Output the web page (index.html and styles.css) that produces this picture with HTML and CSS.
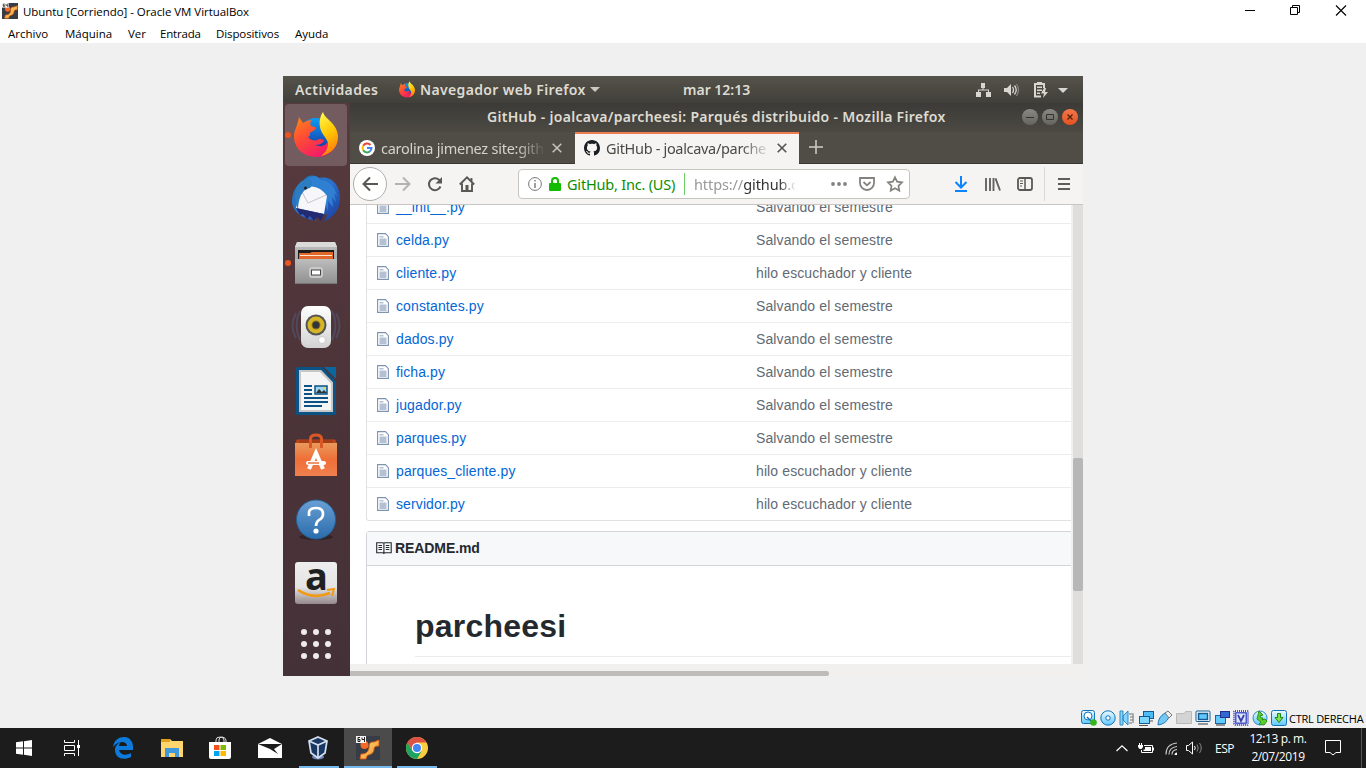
FILE: index.html
```
<!DOCTYPE html>
<html lang="es">
<head>
<meta charset="utf-8">
<title>Ubuntu [Corriendo] - Oracle VM VirtualBox</title>
<link rel="stylesheet" href="styles.css">
</head>
<body>
<svg class="defs" width="0" height="0" aria-hidden="true">
  <defs>
    <linearGradient id="ffRed" x1="0" y1="0" x2=".7" y2="1"><stop offset="0" stop-color="#ff8a16"/><stop offset=".45" stop-color="#ff4b35"/><stop offset="1" stop-color="#f0136f"/></linearGradient>
    <linearGradient id="ffYellow" x1=".3" y1="0" x2=".6" y2="1"><stop offset="0" stop-color="#fff44a"/><stop offset=".5" stop-color="#ffc400"/><stop offset="1" stop-color="#ff7a10"/></linearGradient>
    <linearGradient id="ffBlue" x1="0" y1="0" x2="0" y2="1"><stop offset="0" stop-color="#0a9cf5"/><stop offset="1" stop-color="#1a2f9c"/></linearGradient>
    <linearGradient id="metal" x1="0" y1="0" x2="0" y2="1"><stop offset="0" stop-color="#bdbdbd"/><stop offset="1" stop-color="#8f8f8f"/></linearGradient>
    <linearGradient id="white" x1="0" y1="0" x2="0" y2="1"><stop offset="0" stop-color="#ffffff"/><stop offset="1" stop-color="#d2d2d2"/></linearGradient>
    <linearGradient id="bag" x1="0" y1="0" x2="0" y2="1"><stop offset="0" stop-color="#e99a5c"/><stop offset=".5" stop-color="#ef6f38"/><stop offset="1" stop-color="#f0804e"/></linearGradient>
    <linearGradient id="help" x1="0" y1="0" x2="0" y2="1"><stop offset="0" stop-color="#6a9fd4"/><stop offset="1" stop-color="#2a6cab"/></linearGradient>
    <linearGradient id="bird" x1="0" y1="0" x2="1" y2="1"><stop offset="0" stop-color="#1d7bb8"/><stop offset=".5" stop-color="#2b6fcc"/><stop offset="1" stop-color="#1a3a9a"/></linearGradient>
    <linearGradient id="sky" x1="0" y1="0" x2="0" y2="1"><stop offset="0" stop-color="#eefaff"/><stop offset="1" stop-color="#5fc8ff"/></linearGradient>
    <linearGradient id="vmgold" x1="0" y1="0" x2="1" y2="1"><stop offset="0" stop-color="#ffe28a"/><stop offset="1" stop-color="#f08a1c"/></linearGradient>
    <symbol id="firefox" viewBox="0 0 44 46">
      <circle cx="22" cy="23" r="17" fill="url(#ffBlue)"/>
      <path d="M5 5c1 2 3 4 4 6 3-2 6-3 9-3-2 2-2 4-1 6 2 1 4 0 5 2-1 3-4 3-6 5 0 2 0 3-2 4 2 3 6 4 9 3 3-2 7-1 7 1-2 3-6 4-9 4 7 3 13 0 14-7 3-2 6-4 9-2 0 12-9 21-21 21C9 45 0 36 0 24 0 18 3 16 5 5z" fill="url(#ffRed)"/>
      <path d="M29 0c1 4 4 6 8 10 4 4 7 9 7 15 0 10-7 17-17 19 4-3 7-7 7-13-1-5-7-9-8-16-1-5 0-11 3-15z" fill="url(#ffYellow)"/>
    </symbol>
    <symbol id="vm64" viewBox="0 0 24 24">
      <rect width="24" height="24" fill="#373c46"/>
      <path d="M4 23l1-5c5 0 7-2 8-6 0-5 1-6 5-6l5-2v6c-4 0-5 1-5 4-1 5-5 4-7 6l-1 3z" fill="url(#vmgold)" stroke="#d45b12"/>
      <circle cx="8.500" cy="9" r="4" fill="#f26a24"/>
      <rect width="10" height="7" fill="#f4f4f4"/>
      <path d="M4 1.500H2v4h2v-2H2M6 1.500v2h2.500M8.500 1v5" fill="none" stroke="#222"/>
    </symbol>
    <symbol id="file" viewBox="0 0 12 16">
      <path d="M.6 1.600h7.900l2.900 3v9.800H.6z" fill="#fff" stroke="#7e93b0" stroke-width="1.100"/>
      <path d="M2.500 4h4v1.400h-4zM2.500 6.500h7V13h-7z" fill="#b4c1d3"/>
    </symbol>
  </defs>
</svg>

<div class="desktop">
  <header class="win-title">
    <svg class="win-icon" width="16" height="16"><use href="#vm64"/></svg>
    <span class="win-name">Ubuntu [Corriendo] - Oracle VM VirtualBox</span>
    <div class="win-buttons">
      <svg width="46" height="23" viewBox="0 0 46 23"><path d="M18 10.500h10" stroke="#000"/></svg>
      <svg width="45" height="23" viewBox="0 0 45 23"><path d="M17.500 7.500h7v7h-7zM19.500 7.500v-2h7v7h-2" fill="none" stroke="#000"/></svg>
      <svg width="46" height="23" viewBox="0 0 46 23"><path d="M18 5.500l10 10M28 5.500l-10 10" stroke="#000" stroke-width="1.100"/></svg>
    </div>
  </header>
  <nav class="win-menu">
    <span class="m1">Archivo</span><span class="m2">Máquina</span><span class="m3">Ver</span><span class="m4">Entrada</span><span class="m5">Dispositivos</span><span class="m6">Ayuda</span>
  </nav>

  <main class="stage">
    <section class="vm">
      <div class="topbar">
        <span class="activities">Actividades</span>
        <svg class="top-fx" width="16" height="17"><use href="#firefox"/></svg>
        <span class="app-name">Navegador web Firefox</span>
        <svg class="caret" width="10" height="5" viewBox="0 0 10 5"><path d="M0 0h10L5 5z" fill="#ccc9c3"/></svg>
        <span class="clock">mar 12:13</span>
        <svg class="tray" width="94" height="20" viewBox="0 0 94 20" fill="#d8d6d1">
          <path d="M6 3h4v5H6zM1 12h5v5H1zM11 12h5v5h-5zM3 9.500h11V12h-1v-1.500H4V12H3zM7.500 8h1v2h-1z"/>
          <path d="M29 8h3l4-4v12l-4-4h-3z"/>
          <path d="M37.500 7q2 3 0 6M39.500 5.500q3.500 4.500 0 9" fill="none" stroke="#d8d6d1" stroke-width="1.300"/>
          <path d="M41.500 4q4 6 0 12" fill="none" stroke="#85827b" stroke-width="1.300"/>
          <path d="M66 16.500h-6V4h9v4M62 3h5" fill="none" stroke="#d8d6d1" stroke-width="2"/>
          <path d="M62 6.500h5v1.500h-5zM62 9.500h5V11h-5zM62 12.500h3V14h-3zM69 8l-3 5.500h3L68 18l5-6h-3l1-4z"/>
          <path d="M83 8h10l-5 5z"/>
        </svg>
      </div>

      <div class="vm-body">
        <aside class="dock">
          <div class="slot active running"><svg width="44" height="46"><use href="#firefox"/></svg></div>
          <div class="slot"><svg width="48" height="48" viewBox="0 0 48 48">
            <path d="M11 6C15 0 22-1 27 3c13-3 21 8 21 20 0 13-8 20-17 24 3-3 4-5 4-8l-13 3c2 1 2 3 2 4C17 44 3 42 0 28 0 15 5 10 11 6z" fill="url(#bird)"/>
            <path d="M15 5c4-5 10-5 14 0 8 0 14 7 16 16l-3-3 2 9-4-5 1 10-5-6v10l-5-13c-1-9-8-14-17-9z" fill="#2f7fd2"/>
            <path d="M10 15c8-7 19-3 25 6l-3 18L4 33c1-8 3-14 6-18z" fill="#f7f7fa"/><path d="M10 17l6 11 18-8" fill="none" stroke="#c5c7d0"/>
            <path d="M3 22C3 11 8 6 14 4c6-1 8 5 4 9-5 1-11 5-12 21-2-3-3-7-3-12z" fill="#2b7cc1"/><circle cx="13.500" cy="13" r="1.500" fill="#222"/>
            <path d="M4 33l28 6-3 7-4-4-3 4-4-5-3 3-4-5-3 1z" fill="#242a72"/>
          </svg></div>
          <div class="slot running"><svg width="44" height="48" viewBox="0 0 44 48">
            <path d="M3 3h38l2 5v37H1V8z" fill="url(#metal)"/><path d="M3 3h38l2 5H1z" fill="#dadada"/>
            <path d="M4 11h36v10H4z" fill="#1f1c1c"/><path d="M5 20v-6h11l2-1h21v7z" fill="#e2672a"/><path d="M6 16.500h32" stroke="#ffe6cc"/>
            <path d="M1 20h42v25H1z" fill="url(#metal)"/><path d="M1 44.500h42" stroke="#777"/>
            <rect x="15" y="28" width="14" height="11" rx="3" fill="#c9c9c9"/><rect x="17.500" y="31" width="9" height="5" fill="#fff" stroke="#444"/>
          </svg></div>
          <div class="slot"><svg width="48" height="46" viewBox="0 0 48 46">
            <path d="M8 7q-7 14 0 29M4 9q-7 13 0 25M40 7q7 14 0 29M44 9q7 13 0 25" fill="none" stroke="#53638f" stroke-width="1.800" opacity=".45"/>
            <rect x="9" y="2" width="30" height="42" rx="7" fill="url(#white)"/>
            <circle cx="24" cy="21" r="10.500" fill="#555"/><circle cx="24" cy="21" r="8.500" fill="#d6b526"/><circle cx="24" cy="21" r="4.500" fill="#8b7a1c"/><circle cx="24" cy="21" r="3.500" fill="#343438"/>
            <circle cx="30" cy="36" r="3.500" fill="#fff" stroke="#ccc"/><path d="M14 34h4v5h-4z" fill="none" stroke="#ddd"/>
          </svg></div>
          <div class="slot"><svg width="40" height="48" viewBox="0 0 40 48">
            <path d="M1.500 1.500h24L38.500 15v31.500h-37z" fill="#f5f5f5" stroke="#0b5384" stroke-width="3" stroke-linejoin="round"/>
            <path d="M4 4h20.500L36 16v28H4z" fill="none" stroke="#c7c7c7" stroke-width="2"/><path d="M28 0h12v12z" fill="#0b679f"/>
            <path d="M8 19h8M8 23h8M8 27h8M8 31h24M8 35h24M8 39h18" stroke="#0b5384" stroke-width="2"/>
            <rect x="19" y="19" width="12" height="8" fill="#9ed5f3" stroke="#0b5384" stroke-width="1.500"/><path d="M20 26l3-4 3 3 2-2 3 3z" fill="#333"/><circle cx="29" cy="21" r="1" fill="#fd2"/>
          </svg></div>
          <div class="slot"><svg width="42" height="46" viewBox="0 0 42 46">
            <path d="M2 7.500h38l2 4V16H0v-4.500z" fill="#bd4519"/>
            <path d="M0 11h42v33H0z" fill="url(#bag)"/><path d="M4 8h34v3H4z" fill="#a83c17"/>
            <path d="M15.500 16V7q0-4 5.500-4t5.500 4v9" fill="none" stroke="#d95826" stroke-width="3"/>
            <path d="M14 37l7-16 7 16" fill="none" stroke="#fff" stroke-width="4"/><path d="M13 31h16" stroke="#fff" stroke-width="4" stroke-linecap="round"/><path d="M13 31h11" stroke="#ef6f38" stroke-width="1.500"/>
          </svg></div>
          <div class="slot"><svg class="help-icon" width="40" height="42" viewBox="0 0 40 42"><ellipse cx="20" cy="38" rx="17" ry="3" fill="#332426"/>
            <circle cx="20" cy="20.500" r="19.500" fill="url(#help)" stroke="#25639b"/><path d="M13 17v-4q1-4 7-4 7 0 7 6 0 4-4 6-3 2-3 6" fill="none" stroke="#fff" stroke-width="2.700"/><circle cx="20" cy="32" r="2.600" fill="#fff"/>
          </svg></div>
          <div class="slot"><div class="amazon"><span>a</span><svg width="42" height="42" viewBox="0 0 42 42"><path d="M3 28q15 10 32 3" fill="none" stroke="#f29a12" stroke-width="2.600"/><path d="M32 28l7-1-2 7" fill="none" stroke="#f29a12" stroke-width="2"/></svg></div></div>
          <div class="slot apps"><svg width="32" height="32" viewBox="0 0 32 32"><g fill="#efebec"><circle cx="4" cy="4" r="3"/><circle cx="16" cy="4" r="3"/><circle cx="28" cy="4" r="3"/><circle cx="4" cy="16" r="3"/><circle cx="16" cy="16" r="3"/><circle cx="28" cy="16" r="3"/><circle cx="4" cy="28" r="3"/><circle cx="16" cy="28" r="3"/><circle cx="28" cy="28" r="3"/></g></svg></div>
        </aside>

        <section class="browser">
          <div class="fx-title">
            <span class="fx-name">GitHub - joalcava/parcheesi: Parqués distribuido - Mozilla Firefox</span>
            <div class="fx-controls">
              <i class="ctl"><svg width="16" height="16" viewBox="0 0 16 16"><path d="M4 8.500h8" stroke="#353430"/></svg></i>
              <i class="ctl"><svg width="16" height="16" viewBox="0 0 16 16"><path d="M4.500 5.500h7v5h-7z" fill="none" stroke="#353430"/></svg></i>
              <i class="ctl close"><svg width="16" height="16" viewBox="0 0 16 16"><path d="M5.500 5.500l5 5M10.500 5.500l-5 5" stroke="#47230f" stroke-width="1.200"/></svg></i>
            </div>
          </div>
          <div class="tabs">
            <div class="tab">
              <svg width="16" height="16" viewBox="0 0 16 16"><circle cx="8" cy="8" r="8" fill="#fff"/><g fill="none" stroke-width="2"><path d="M11.500 5A4.500 4.500 0 0 0 4.200 5.700" stroke="#ea4335"/><path d="M4.200 5.700a4.500 4.500 0 0 0 0 4.600" stroke="#fbbc05"/><path d="M4.200 10.300A4.500 4.500 0 0 0 11 11.300" stroke="#34a853"/><path d="M11 11.300A4.500 4.500 0 0 0 12.500 8H8" stroke="#4285f4"/></g></svg>
              <span class="tab-text t1">carolina jimenez site:gith</span>
              <svg class="x" width="10" height="10" viewBox="0 0 10 10"><path d="M.7.7l8.600 8.600M9.300.7L.7 9.300" stroke="#c9c6c0" stroke-width="1.500"/></svg>
            </div>
            <div class="tab current">
              <svg width="16" height="16" viewBox="0 0 16 16"><path fill="#1b1f23" fill-rule="evenodd" d="M8 0C3.580 0 0 3.580 0 8c0 3.540 2.290 6.530 5.470 7.590.4.070.55-.17.55-.38 0-.19-.01-.82-.01-1.490-2.010.37-2.530-.49-2.690-.94-.09-.23-.48-.94-.82-1.130-.28-.15-.68-.52-.01-.53.63-.01 1.080.58 1.230.82.72 1.210 1.870.87 2.330.66.070-.52.28-.87.51-1.070-1.780-.2-3.640-.89-3.640-3.950 0-.87.31-1.590.82-2.150-.08-.2-.36-1.020.08-2.120 0 0 .67-.21 2.200.82.64-.18 1.320-.27 2-.27s1.360.09 2 .27c1.530-1.040 2.200-.82 2.200-.82.44 1.100.16 1.920.08 2.120.51.56.82 1.270.82 2.150 0 3.070-1.870 3.750-3.650 3.950.29.25.54.73.54 1.480 0 1.070-.01 1.930-.01 2.200 0 .21.15.46.55.38A8.010 8.010 0 0 0 16 8c0-4.420-3.580-8-8-8z"/></svg>
              <span class="tab-text t2">GitHub - joalcava/parche</span>
              <svg class="x" width="10" height="10" viewBox="0 0 10 10"><path d="M.7.7l8.600 8.600M9.300.7L.7 9.300" stroke="#55534e" stroke-width="1.600"/></svg>
            </div>
            <svg class="plus" width="14" height="14" viewBox="0 0 14 14"><path d="M7 0v14M0 7h14" stroke="#d0cec8" stroke-width="1.500"/></svg>
          </div>
          <div class="toolbar">
            <div class="back"><svg width="16" height="16" viewBox="0 0 16 16"><path d="M16 8H1.500M8 1.500L1.500 8 8 14.500" fill="none" stroke="#5a5853" stroke-width="2"/></svg></div>
            <svg class="fwd" width="16" height="16" viewBox="0 0 16 16"><path d="M0 8h14.500M8 1.500L14.500 8 8 14.500" fill="none" stroke="#b5b3af" stroke-width="2"/></svg>
            <svg class="reload" width="16" height="16" viewBox="0 0 16 16"><path d="M13.500 10.500A6 6 0 1 1 12 3.700l1.500 1.500" fill="none" stroke="#5a5853" stroke-width="2"/><path d="M15 1v6.500H8.500z" fill="#5a5853"/></svg>
            <svg class="home" width="16" height="16" viewBox="0 0 16 16"><path d="M.8 8.500L8 1.400l7.200 7.100M3 7.500V15h10V7.500M12.500 2v4" fill="none" stroke="#5a5853" stroke-width="1.900"/><path d="M6.500 9h3v6h-3z" fill="#5a5853"/></svg>
            <div class="urlbar">
              <svg class="info" width="14" height="14" viewBox="0 0 14 14"><circle cx="7" cy="7" r="6.400" fill="none" stroke="#777"/><path d="M7 6v5M7 3v1.500" stroke="#777" stroke-width="1.400"/></svg>
              <svg class="lock" width="12" height="14" viewBox="0 0 12 14"><path d="M3 7V4a3 3 0 0 1 6 0v3" fill="none" stroke="#12bc00" stroke-width="2"/><rect y="6" width="12" height="8" rx="1" fill="#12bc00"/></svg>
              <span class="org">GitHub, Inc. (US)</span>
              <span class="url"><span>https://</span>github.c</span>
              <svg class="dots" width="16" height="4" viewBox="0 0 16 4" fill="#84827e"><circle cx="2" cy="2" r="1.900"/><circle cx="8" cy="2" r="1.900"/><circle cx="14" cy="2" r="1.900"/></svg>
              <svg class="pocket" width="16" height="14" viewBox="0 0 16 14"><path d="M1 1h14v5a7 7 0 0 1-14 0zM4.500 5L8 8.300 11.500 5" fill="none" stroke="#84827e" stroke-width="1.800"/></svg>
              <svg class="star" width="16" height="16" viewBox="0 0 16 16"><path d="M8 1.300l2.100 4.400 4.900.7-3.500 3.400.8 4.800L8 12.300l-4.300 2.300.8-4.800L1 6.400l4.900-.7z" fill="none" stroke="#84827e" stroke-width="1.700"/></svg>
            </div>
            <svg class="download" width="14" height="16" viewBox="0 0 14 16"><path d="M7 0v11M1.500 6L7 11.500 12.500 6M1 15h12" fill="none" stroke="#0a84ff" stroke-width="2"/></svg>
            <svg class="library" width="16" height="14" viewBox="0 0 16 14"><path d="M1 1v13M5 1v13M8.500 1v13M10.500 1.400L15 13.500" stroke="#666460" stroke-width="1.900"/></svg>
            <svg class="sidebar" width="16" height="14" viewBox="0 0 16 14"><rect x="1" y="1" width="14" height="12" rx="2" fill="none" stroke="#5a5853" stroke-width="1.800"/><path d="M8 1v12" stroke="#5a5853" stroke-width="1.500"/><path d="M3 4h3M3 6.500h3M3 9h2" stroke="#5a5853"/></svg>
            <div class="menu"><svg width="12" height="12" viewBox="0 0 12 12"><path d="M0 1h12M0 6h12M0 11h12" stroke="#5f5d58" stroke-width="2"/></svg></div>
          </div>
          <div class="viewport">
            <div class="page">
              <div class="files">
                <div class="row"><svg width="12" height="16"><use href="#file"/></svg><a>__init__.py</a><span>Salvando el semestre</span></div>
                <div class="row"><svg width="12" height="16"><use href="#file"/></svg><a>celda.py</a><span>Salvando el semestre</span></div>
                <div class="row"><svg width="12" height="16"><use href="#file"/></svg><a>cliente.py</a><span>hilo escuchador y cliente</span></div>
                <div class="row"><svg width="12" height="16"><use href="#file"/></svg><a>constantes.py</a><span>Salvando el semestre</span></div>
                <div class="row"><svg width="12" height="16"><use href="#file"/></svg><a>dados.py</a><span>Salvando el semestre</span></div>
                <div class="row"><svg width="12" height="16"><use href="#file"/></svg><a>ficha.py</a><span>Salvando el semestre</span></div>
                <div class="row"><svg width="12" height="16"><use href="#file"/></svg><a>jugador.py</a><span>Salvando el semestre</span></div>
                <div class="row"><svg width="12" height="16"><use href="#file"/></svg><a>parques.py</a><span>Salvando el semestre</span></div>
                <div class="row"><svg width="12" height="16"><use href="#file"/></svg><a>parques_cliente.py</a><span>hilo escuchador y cliente</span></div>
                <div class="row"><svg width="12" height="16"><use href="#file"/></svg><a>servidor.py</a><span>hilo escuchador y cliente</span></div>
              </div>
              <div class="readme">
                <div class="readme-head"><svg width="16" height="14" viewBox="0 0 16 14"><path d="M.7 1.700H7l.9.800.9-.8h6.400v10H8.800l-.9.800-.9-.8H.700zM7.900 2v10.500M2.500 4.500H6M2.500 6.500H6M2.500 8.500H6M9.800 4.500h3.500M9.800 6.500h3.500M9.800 8.500h3.500" fill="none" stroke="#24292e" stroke-width="1.100"/></svg><span>README.md</span></div>
                <h1>parcheesi</h1>
              </div>
            </div>
            <div class="vscroll"><div class="vthumb"></div></div>
          </div>
          <div class="hscroll"><div class="hthumb"></div></div>
        </section>
      </div>
    </section>
  </main>

  <div class="vm-status">
    <svg width="16" height="16" viewBox="0 0 16 16"><rect x=".5" y=".5" width="13" height="13" rx="2" fill="url(#sky)" stroke="#1273b8"/><circle cx="7" cy="6" r="4" fill="#fff" stroke="#1273b8"/><path d="M6 7l5 5" stroke="#1273b8" stroke-width="1.500"/><circle cx="12.500" cy="12.500" r="3.300" fill="#38b51c"/></svg>
    <svg width="16" height="16" viewBox="0 0 16 16"><circle cx="8" cy="8" r="7.200" fill="url(#sky)" stroke="#1273b8"/><circle cx="8" cy="8" r="2.200" fill="#fff" stroke="#1273b8"/></svg>
    <svg width="16" height="16" viewBox="0 0 16 16"><path d="M1 1h3v14H1zM4 6l5-5v14l-5-5z" fill="#83d4ff" stroke="#3189bd"/><path d="M10 4h4v9M11 7h4M11 10h4M10 13h3" fill="none" stroke="#999" stroke-width="1.500"/></svg>
    <svg width="16" height="16" viewBox="0 0 16 16"><rect x="5.500" y="1.500" width="10" height="7" fill="#4dbdf5" stroke="#155b91"/><rect x="1.500" y="6.500" width="10" height="7" fill="#7dd6ff" stroke="#155b91"/><path d="M1 15.500h9M12 11h3" stroke="#555"/></svg>
    <svg width="16" height="16" viewBox="0 0 16 16"><path d="M1 15q0-8 7-12l4 4q-3 7-11 8z" fill="#73c9f5" stroke="#2279b5"/><path d="M8 3l3-2 4 4-3 3z" fill="#eee" stroke="#777"/></svg>
    <svg width="16" height="16" viewBox="0 0 16 16"><path d="M.5 3.500h8l1-2h6v12H.5z" fill="#d4d4d4" stroke="#bababa"/></svg>
    <svg width="16" height="16" viewBox="0 0 16 16"><rect x="1" y="1" width="14" height="10.500" rx="1" fill="#fff" stroke="#155b91"/><rect x="3.500" y="3.500" width="9" height="6" fill="#5fc8ff" stroke="#155b91" stroke-width="1.500"/><path d="M3 14h10" stroke="#777" stroke-width="1.500"/></svg>
    <svg width="16" height="16" viewBox="0 0 16 16"><rect x="1.500" y="5.500" width="10" height="8" fill="#63c8fa" stroke="#1567a7"/><path d="M2 15h9" stroke="#333"/><rect x="6.500" y="1.500" width="9" height="6" fill="#3369ce" stroke="#1f2f94"/></svg>
    <svg width="16" height="16" viewBox="0 0 16 16"><rect x="1" y="1" width="14" height="14" rx="1" fill="#eef" stroke="#4b51bc" stroke-width="2" stroke-dasharray="1 1"/><rect x="2" y="2" width="12" height="12" rx="1" fill="#4d5cc9"/><rect x="3.500" y="3.500" width="9" height="9" fill="#dfe2fa"/><path d="M5 5l3 6 3-6" fill="none" stroke="#3440a8" stroke-width="1.700"/></svg>
    <svg width="16" height="16" viewBox="0 0 16 16"><circle cx="8" cy="8" r="7" fill="url(#sky)" stroke="#2f89bd"/><path d="M7 1l4 4-3 1 1 2h2l-1 2 3-1 2 2-3 4-5-1 2-2-4-3z" fill="#5ccf2b" stroke="#2b911b"/></svg>
    <svg width="16" height="16" viewBox="0 0 16 16"><rect x=".5" y=".5" width="15" height="15" rx="2" fill="url(#sky)" stroke="#1273b8"/><path d="M6.500 3.500h3v4H12l-4 5-4-5h2.500z" fill="#7fe04a" stroke="#1f8517"/></svg>
    <span>CTRL DERECHA</span>
  </div>

  <footer class="taskbar">
    <div class="task"><svg width="16" height="16" viewBox="0 0 16 16"><path d="M0 2.300L7 1.300v6.200H0zM8 1.200L16 0v7.500H8zM0 8.500h7v6.200l-7-1zM8 8.500h8V16l-8-1.200z" fill="#fff"/></svg></div>
    <div class="task"><svg width="16" height="16" viewBox="0 0 16 16"><path d="M.5 0v2.500h10V0M.5 16v-2.500h10V16M.5 5.500h10v5H.5zM14.500 0v16" fill="none" stroke="#fff"/><path d="M13 5h3v3h-3z" fill="#fff"/></svg></div>
    <div class="task edge"><svg width="20" height="22" viewBox="0 0 20 22"><path d="M0 10C1 3 6 0 11 0c6 0 9 5 9 10v3H6c1 5 7 6 12 3v4c-8 4-16 1-16-7 0-4 3-7 6-8-2 2-2 3-2 4h8c0-5-9-6-14 1z" fill="#0c7bdc"/></svg></div>
    <div class="task files-app"><svg width="22" height="20" viewBox="0 0 22 20"><path d="M0 1h9l2 2h11v16H0z" fill="#ffd66e"/><path d="M0 1h9v3H0z" fill="#e3a21a"/><path d="M4 19V10h14v9h-4v-4H8v4z" fill="#3f99dc"/></svg></div>
    <div class="task"><svg width="24" height="24" viewBox="0 0 24 24"><path d="M8 7V4q0-3 4-3t4 3v3M11 7V4q0-3 3-3t4 3v3" fill="none" stroke="#ddd"/><path d="M1 6h22v15q0 2-2 2H3q-2 0-2-2z" fill="#fff"/><path d="M6 9h5.500v5H6z" fill="#f25022"/><path d="M12.500 9H18v5h-5.500z" fill="#7fba00"/><path d="M6 15h5.500v5H6z" fill="#00a4ef"/><path d="M12.500 15H18v5h-5.500z" fill="#ffb900"/></svg></div>
    <div class="task mail"><svg width="24" height="20" viewBox="0 0 24 20"><path d="M0 6l12-6 12 6v14H0z" fill="#fff"/><path d="M0 6h24l-8 5 4 5-8-5z" fill="#1c1c1c"/></svg></div>
    <div class="task open vbox"><svg width="20" height="24" viewBox="0 0 20 24"><ellipse cx="10" cy="21" rx="6" ry="2.500" fill="#6c84b5"/><path d="M10 1l9 4-2 12-7 5-7-5L1 5z" fill="#183863" stroke="#d5e0ef" stroke-width="1.700"/><path d="M1 5l9 4 9-4M10 9v12" fill="none" stroke="#d5e0ef" stroke-width="1.700"/></svg></div>
    <div class="task open focus"><svg width="24" height="24"><use href="#vm64"/></svg></div>
    <div class="task open chrome"><svg width="22" height="22" viewBox="0 0 22 22"><circle cx="11" cy="11" r="11" fill="#fbcd40"/><path d="M1.500 5.500A11 11 0 0 1 20.500 5.500H11L6.200 13.700z" fill="#dd5144"/><path d="M1.500 5.500A11 11 0 0 0 11 22L15.800 13.700 11 16 6.200 13.700z" fill="#1da462"/><circle cx="11" cy="11" r="5.200" fill="#fff"/><circle cx="11" cy="11" r="4" fill="#4285f4"/></svg></div>
    <div class="systray">
      <svg class="up" width="12" height="7" viewBox="0 0 12 7"><path d="M.5 6L6 .8 11.500 6" fill="none" stroke="#fff" stroke-width="1.200"/></svg>
      <svg class="bat" width="16" height="11" viewBox="0 0 16 11"><path d="M6 2.500h8.500v7h-11V7" fill="none" stroke="#fff"/><path d="M15 4.500h1v3h-1zM7 4h6v4H5.500V6.500H7zM0 2h5v2L3.500 6h-2L0 4zM1 0h1v2H1zM3 0h1v2H3z" fill="#fff"/></svg>
      <svg class="wifi" width="13" height="13" viewBox="0 0 13 13"><path d="M1 12.500Q1 2 12 1M4 12.500Q4 5.500 12 4.500M7 12.500Q7 8 12 7.500" fill="none" stroke="#c7c7c7" stroke-width="1.200"/><path d="M9.500 13q0-2.500 2.500-2.500V13z" fill="#fff"/></svg>
      <svg class="vol" width="17" height="14" viewBox="0 0 17 14"><path d="M.5 4.500h2l4-3.500v12l-4-3.500h-2z" fill="none" stroke="#fff"/><path d="M8.500 5q1.500 2 0 4" fill="none" stroke="#fff"/><path d="M11 3.500q2.500 3.500 0 7M13.500 2q3.500 5 0 10" fill="none" stroke="#888"/></svg>
      <span class="lang">ESP</span>
      <div class="datetime"><span class="time">12:13 p. m.</span><span class="date">2/07/2019</span></div>
      <svg class="note" width="16" height="16" viewBox="0 0 16 16"><path d="M.5.500h15v12H11L8 15l-3-2.500H.5z" fill="none" stroke="#fff"/></svg>
      <i class="peek"></i>
    </div>
  </footer>
</div>
</body>
</html>
```
FILE: styles.css
```
* { box-sizing: border-box; }
html, body { margin: 0; width: 1366px; height: 768px; overflow: hidden; }
body { font-family: "Open Sans", "Noto Sans", sans-serif; }
svg { display: block; flex: none; overflow: visible; }
.defs { position: absolute; }
span, a { white-space: nowrap; }
.desktop { width: 1366px; height: 768px; display: flex; flex-direction: column; background: #f0f0f0; color: #000; }

.win-title { height: 24px; background: #fff; display: flex; align-items: flex-start; padding-left: 2px; font-size: 11.500px; }
.win-icon { margin: 3px 5px 0 0; }
.win-name { line-height: 24px; flex: 1; letter-spacing: -.05px; }
.win-buttons { display: flex; padding-right: 2px; }
.win-menu { height: 19px; background: #fff; display: flex; padding-left: 8px; font-size: 11.500px; line-height: 19px; }
.m1 { width: 57px; } .m2 { width: 63px; } .m3 { width: 32px; } .m4 { width: 56px; letter-spacing: -.2px; } .m5 { width: 79px; letter-spacing: -.1px; }

.stage { height: 665px; padding: 33px 0 0 283px; }
.vm { width: 800px; height: 600px; display: flex; flex-direction: column; font-family: "Noto Sans", sans-serif; }
.topbar { height: 27px; display: flex; align-items: center; background: linear-gradient(#55534a, #403f3a); color: #dfdbd2; font-weight: 600; font-size: 14px; padding-left: 12px; }
.activities { width: 104px; letter-spacing: .45px; }
.top-fx { margin-right: 5px; }
.app-name { width: 170px; letter-spacing: .35px; }
.caret { margin-right: 83px; }
.clock { width: 292px; padding-bottom: 1px; }
.vm-body { height: 573px; display: flex; }

.dock { width: 67px; background: linear-gradient(165deg, #573a3e, #4c3438 50%, #443138); padding: 1px 0 0 2px; display: flex; flex-direction: column; gap: 2px; }
.slot { width: 62px; height: 62px; display: flex; align-items: center; justify-content: center; position: relative; flex: none; border-radius: 4px; }
.slot.active { background: #735c5f; }
.slot.running::before { content: ""; position: absolute; left: 0; top: 28px; width: 6px; height: 6px; border-radius: 50%; background: #e95420; }
.slot.apps { height: 56px; }
.help-icon { margin-top: 2px; }
.amazon { width: 42px; height: 42px; border-radius: 3px; background: linear-gradient(#eee, #e4e4e4 60%, #94888b); position: relative; }
.amazon span { position: absolute; left: 10px; top: -8px; font: bold 38px/42px "Open Sans", sans-serif; color: #202020; }
.amazon svg { position: absolute; left: 0; top: 0; }

.browser { width: 733px; display: flex; flex-direction: column; }
.fx-title { height: 29px; background: linear-gradient(#3c3b37, #4c4943); display: flex; align-items: center; padding: 0 0 2px 137px; color: #dfdbd2; }
.fx-name { width: 535px; font-size: 14px; font-weight: 600; letter-spacing: .3px; }
.fx-controls { display: flex; gap: 4px; }
.ctl { width: 16px; height: 16px; border-radius: 50%; background: linear-gradient(#8b8983, #66645f); }
.ctl.close { background: linear-gradient(#f4764c, #e4521f); }
.tabs { height: 32px; background: #504d46; display: flex; box-shadow: inset 0 -1px #383631; }
.tab { width: 225px; display: flex; align-items: center; padding-left: 9px; color: #d6d2ca; font-size: 14.500px; }
.tab.current { width: 224px; background: #f5f4f2; color: #4b4944; border-top: 2px solid #ee7d50; padding-bottom: 2px; }
.tab-text { width: 165px; margin-left: 6px; overflow: hidden; -webkit-mask-image: linear-gradient(90deg, #000 82%, transparent); mask-image: linear-gradient(90deg, #000 82%, transparent); }
.t1 { letter-spacing: -.25px; }
.t2 { letter-spacing: -.32px; }
.x { margin-left: 6px; }
.plus { margin: 8px 0 0 10px; }

.toolbar { height: 41px; background: #f5f4f2; border-bottom: 1px solid #c8c5c2; display: flex; align-items: center; padding-left: 3px; }
.back { width: 34px; height: 34px; border: 1px solid #b0aeab; border-radius: 50%; background: #fff; display: flex; align-items: center; justify-content: center; }
.fwd { margin-left: 8px; }
.reload, .home { margin-left: 16px; }
.urlbar { margin-left: 43px; width: 392px; height: 30px; border: 1px solid #c6c4c1; border-radius: 4px; background: #fff; display: flex; align-items: center; padding-left: 9px; font-size: 14.500px; }
.lock { margin: 0 6px 0 7px; }
.org { width: 118px; height: 22px; line-height: 22px; color: #0a8f00; border-right: 1px solid #6fcf68; letter-spacing: -.2px; }
.url { width: 104px; margin-left: 9px; overflow: hidden; color: #333; letter-spacing: -.1px; -webkit-mask-image: linear-gradient(90deg, #000 82%, transparent 98%); mask-image: linear-gradient(90deg, #000 82%, transparent 98%); }
.url span { color: #999; }
.dots { margin-left: 33px; }
.pocket, .star { margin-left: 12px; }
.download { margin-left: 44px; }
.library { margin-left: 17px; }
.sidebar { margin-left: 16px; }
.menu { margin-left: 11px; height: 34px; border-left: 1px solid #dbd9d6; padding: 11px 0 0 13px; }

.viewport { height: 459px; display: flex; background: #f1f0ee; }
.page { width: 721px; height: 459px; overflow: hidden; background: #fff; padding-left: 16px; font-family: "Liberation Sans", Arial, sans-serif; font-size: 14px; }
.files { margin-top: -15px; width: 720px; border: 1px solid #dfe2e5; border-top: 0; border-radius: 3px; }
.row { height: 33px; border-top: 1px solid #eaecef; display: flex; align-items: center; padding: 0 0 1px 10px; letter-spacing: .11px; }
.row a { width: 360px; margin-left: 7px; color: #0366d6; }
.row span { color: #626a74; }
.readme { margin-top: 10px; width: 720px; border: 1px solid #d1d5da; border-radius: 3px; height: 300px; }
.readme-head { height: 34px; background: #f6f8fa; border-bottom: 1px solid #d1d5da; display: flex; align-items: center; padding: 0 0 2px 9px; gap: 3px; font-weight: bold; letter-spacing: -.08px; color: #24292e; }
h1 { margin: 40px 0 0 48px; padding-bottom: 10px; font-size: 32px; line-height: 40px; letter-spacing: .2px; color: #24292e; border-bottom: 1px solid #eaecef; }
.vscroll { width: 10px; margin-left: 2px; background: #dfdedc; padding-top: 253px; }
.vthumb { height: 133px; background: #b7b7b7; border-radius: 2px; }
.hscroll { height: 12px; background: #f1f0ee; padding-top: 7px; }
.hthumb { width: 479px; height: 5px; background: #bdbcbb; border-radius: 0 2px 2px 0; }

.vm-status { height: 20px; display: flex; align-items: center; gap: 3px; padding-left: 1081px; font-size: 11px; }
.vm-status span { letter-spacing: -.25px; margin-left: -1px; }

.taskbar { height: 40px; background: #1c1c1c; display: flex; color: #fff; }
.task { width: 48px; height: 40px; display: flex; align-items: center; justify-content: center; flex: none; }
.edge { margin-left: 3px; }
.files-app { margin-left: 1px; }
.mail { margin-left: 2px; }
.task.open { border-bottom: 2px solid #76b9ed; padding-top: 2px; }
.task.vbox { width: 40px; margin: 0 5px; padding-right: 3px; }
.task.chrome { width: 40px; margin-left: 5px; }
.task.focus { background: #4b4b4b; }
.systray { margin-left: auto; display: flex; align-items: center; font-size: 12px; }
.bat { margin-left: 10px; }
.wifi { margin-left: 11px; }
.vol { margin-left: 8px; }
.lang { margin-left: 12px; letter-spacing: -.5px; }
.datetime { display: flex; flex-direction: column; align-items: center; line-height: 18px; width: 66px; margin-left: 11px; letter-spacing: -.4px; }
.note { margin-left: 14px; }
.peek { width: 1px; height: 40px; background: #555; margin: 0 4px 0 20px; }
```
